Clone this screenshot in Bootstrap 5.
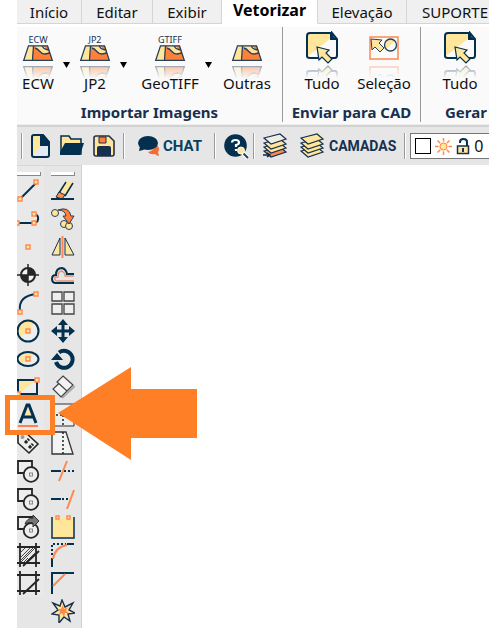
<!DOCTYPE html>
<html lang="pt">
<head>
<meta charset="utf-8">
<meta name="viewport" content="width=device-width, initial-scale=1">
<title>Vetorizar</title>
<link href="https://cdn.jsdelivr.net/npm/bootstrap@5.3.0/dist/css/bootstrap.min.css" rel="stylesheet">
<style>
:root{--navy:#03304f;--cream:#ffe69b;--orange:#ff8850;--panel:#e6e6e6}
body{font-family:"Noto Sans","Open Sans",sans-serif;font-size:16px;line-height:20px;color:#000;background:#fff}
svg{display:block;flex:none}
.app{padding-left:17px;min-height:100vh;overflow:hidden}
.tabs{height:27px}
.tabs .nav-link{padding:0;height:24px;color:#111;background:#f0f0f0;border:solid #d5d5d5;border-width:0 1px 1px 0;border-radius:0;font-size:15px;line-height:24px;flex:none}
.tabs .nav-link.active{background:#fff;border-bottom-color:#fff;color:#000;font-size:16px;font-weight:700;line-height:20px}
.t64{width:65px}.t71{width:71px}.t69{width:69px}.t96{width:96px}.t89{width:89px}.t97{width:97px}
.ribbon{background:#fafafa;height:98px;border-bottom:1px solid #eee}
.grp{height:95px;border-right:1px solid #999;flex:none}
.g1{width:266px}.g2{width:138px}.g3{width:160px}
.tool{background:none;border:0;padding:0;display:flex;flex-direction:column;align-items:center;line-height:18px;font-size:15px;flex:none;color:#111}
.tool svg{height:47px;margin-bottom:-4px}
.w42{width:42px}.w62{width:62px}
.caret{background:none;border:0;padding:31px 0 0;width:15px;display:flex;justify-content:center;flex:none}
.cap{font-weight:700;color:#17304f;font-size:15px;line-height:20px;padding-top:10px}
.bar{background:var(--panel);height:40px;border-top:2px solid #d2d2d2}
.bar button,.rail button{background:none;border:0;padding:0;flex:none}
.word{font:700 15px/20px Roboto,sans-serif;color:#06415a}
.word.dark{font-size:14px;color:#17304f}
.rule{width:2px;height:26px;border-left:1px solid #999;background:#fff;flex:none}
.layer{background:#fff;border:1px solid #777;height:26px;width:150px;flex:none}
.layer select{appearance:none;border:0;background:#fff;padding:0;font-size:16px;line-height:20px;color:#111;width:50px}
.swatch{width:16px;height:16px;border:1px solid #000;flex:none}
.work{min-height:calc(100vh - 165px)}
.dock{background:var(--panel);width:65px;border-right:1px solid #d0d0d0;border-top:1px solid #d8d8d8;flex:none}
.rail{display:flex;flex-direction:column;align-items:flex-start;flex:none;padding-top:6px}
.railA{width:27px;background:#e9e9e9;align-self:flex-start}
.railB{width:31px;margin-left:7px}
.rail button{height:28px;width:24px;display:flex;align-items:center}
.grip{width:24px;height:4px;background:#fff;border:solid #888;border-width:0 1px 1px 0;margin-bottom:1px}
.mark-box{position:absolute;left:5px;top:395px;width:50px;height:40px;border:5px solid #ff7f27}
.mark-arrow{position:absolute;left:57px;top:366px}
.i{fill:none;stroke:var(--navy);stroke-width:2}
.thin{stroke-width:1.5}.thick{stroke-width:3}.fat{stroke-width:4}
.p{fill:var(--cream);stroke:var(--orange);stroke-width:1.4}
.c{fill:var(--cream)}.o{fill:var(--orange)}.n{fill:var(--navy)}
.k{fill:none;stroke:#252525;stroke-width:1.8}
.tiny{font:9px "Noto Sans",sans-serif;fill:#17304f;text-anchor:middle}
</style>
<script src="https://cdn.jsdelivr.net/npm/bootstrap@5.3.0/dist/js/bootstrap.bundle.min.js"></script>
</head>
<body>
<svg width="0" height="0" class="position-absolute" aria-hidden="true">
<defs>
<linearGradient id="fade" x1="0" y1="0" x2="0" y2="1"><stop offset="0" stop-color="#fafafa" stop-opacity=".55"/><stop offset=".8" stop-color="#fafafa"/></linearGradient>
<g id="map"><path d="M5.500 .8H24.500L29.300 15.300H.7Z" fill="#ff8038"/><path d="M5.500 .8H10.500L9 15.300H.7ZM12 1H24C27 5 26 9 22 9C16 9 17 4 12 3Z" fill="#ffe69b"/><path d="M20 1H25L27 6C23 6 23 2 20 1Z" fill="#ff8038"/><path d="M5.500 .8H24.500L29.300 15.300H.7ZM10.500 1L9.500 15M12 3C17 4 16 9 22 9L27 8M19 1C21 5 23 4 26 5" fill="none" stroke="#27405c" stroke-width="1.300"/></g>
<g id="mapset"><use href="#map" x="1" y="13"/><use href="#map" transform="translate(1 50) scale(1 -1)"/><path d="M0 34H32V50H0Z" fill="url(#fade)"/></g>
<g id="send"><path d="M4 1H26L31 6V24Q31 27 28 27H4Q1 27 1 24V4Q1 1 4 1Z" fill="#fafafa"/><path d="M2 2H25V6L2 24Z" class="c"/><path d="M24 1L31 8H24Z" class="n"/><path d="M26 1H4Q1 1 1 4V24Q1 26 4 26H13M24 26H29Q31 26 31 23V7L26 1V7H31" fill="none" stroke="#03304f" stroke-width="2"/><path d="M11 15L23 18L20 21L26 27L22 31L16 25L13 28Z" fill="#ffe69b" stroke="#03304f" stroke-width="1.200"/></g>
<g id="sheet"><path d="M1 5L17 1L23 6L8 11Z"/></g>
<g id="trim"><path d="M1 2H15V14H1Z" fill="#eee" stroke="#252525" stroke-width="1.800"/><circle cx="14" cy="15.500" r="7.300" fill="#eee" stroke="#252525" stroke-width="1.800"/><rect x="12.500" y="14" width="3" height="3" fill="none" stroke="#888"/></g>
</defs>
</svg>
<div class="app position-relative">
<nav class="tabs nav flex-nowrap text-center" aria-label="Menu">
<a class="nav-link t64" href="#">Início</a><a class="nav-link t71" href="#">Editar</a><a class="nav-link t69" href="#">Exibir</a><a class="nav-link active t96" href="#" aria-current="page">Vetorizar</a><a class="nav-link t89" href="#">Elevação</a><a class="nav-link t97" href="#">SUPORTE</a>
</nav>
<section class="ribbon d-flex">
<div class="grp g1"><div class="d-flex pt-1">
<button class="tool w42"><svg width="32" height="47" viewBox="0 0 32 47"><text x="16" y="12" class="tiny">ECW</text><use href="#mapset" y="1"/></svg>ECW</button>
<button class="caret" aria-label="Opções ECW"><svg width="7" height="6"><path d="M0 0H7L3.500 6Z"/></svg></button>
<button class="tool w42"><svg width="32" height="47" viewBox="0 0 32 47"><text x="16" y="12" class="tiny">JP2</text><use href="#mapset" y="1"/></svg>JP2</button>
<button class="caret" aria-label="Opções JP2"><svg width="7" height="6"><path d="M0 0H7L3.500 6Z"/></svg></button>
<button class="tool w62 ms-2"><svg width="32" height="47" viewBox="0 0 32 47"><text x="16" y="12" class="tiny">GTIFF</text><use href="#mapset" y="1"/></svg>GeoTIFF</button>
<button class="caret" aria-label="Opções GeoTIFF"><svg width="7" height="6"><path d="M0 0H7L3.500 6Z"/></svg></button>
<button class="tool w62"><svg width="32" height="47" viewBox="0 0 32 47"><use href="#mapset" y="1"/></svg>Outras</button>
</div><div class="cap text-center">Importar Imagens</div></div>
<div class="grp g2"><div class="d-flex pt-1 ps-2">
<button class="tool w62"><svg width="32" height="47" viewBox="0 0 32 47"><use href="#send" y="1"/><use href="#send" transform="translate(0 66) scale(1 -1)"/><path d="M0 34H32V50H0Z" fill="url(#fade)"/></svg>Tudo</button>
<button class="tool w62"><svg width="32" height="47" viewBox="0 0 32 47"><g id="sel"><rect x="2" y="6" width="28" height="22" fill="#fafafa" stroke="#ff8850" stroke-width="1.500"/><path d="M3 8L14 9L11 12L16 17L12 21L7 16L4 19Z" fill="#ffe69b" stroke="#27405c"/><circle cx="22.500" cy="14" r="6" fill="#fafafa"/><path d="M18 18A6 6 0 0 1 27 10Z" class="c"/><circle cx="22.500" cy="14" r="6" fill="none" stroke="#27405c" stroke-width="1.300"/></g><use href="#sel" transform="translate(0 64) scale(1 -1)"/><path d="M0 34H32V50H0Z" fill="url(#fade)"/></svg>Seleção</button>
</div><div class="cap text-center">Enviar para CAD</div></div>
<div class="grp g3"><div class="d-flex pt-1 ps-2">
<button class="tool w62"><svg width="32" height="47" viewBox="0 0 32 47"><use href="#send" y="1"/><use href="#send" transform="translate(0 66) scale(1 -1)"/><path d="M0 34H32V50H0Z" fill="url(#fade)"/></svg>Tudo</button>
</div><div class="cap ps-4">Gerar</div></div>
</section>
<section class="bar d-flex align-items-center">
<i class="rule ms-1"></i>
<button class="ms-2" aria-label="Novo"><svg width="20" height="26" viewBox="0 0 20 26"><path d="M3 2H12L18 9V22Q18 24 16 24H3Q1 24 1 22V4Q1 2 3 2Z" fill="#e2eaf4"/><path d="M2 3H10V12L2 23Z" class="c"/><path d="M9 2H13L19 9V13H9Z" class="n"/><path d="M3 2H12L18 9V22Q18 24 16 24H3Q1 24 1 22V4Q1 2 3 2Z" class="i"/></svg></button>
<button class="ms-2" aria-label="Abrir"><svg width="26" height="24" viewBox="0 0 26 24"><path d="M2 2H10L12 5H22V20H2Z" fill="#ffe69b" stroke="#03304f" stroke-width="1.500"/><path d="M6 9H25L21 21H1V18Z" class="n"/></svg></button>
<button class="ms-2" aria-label="Salvar"><svg width="22" height="24" viewBox="0 0 22 24"><path d="M3 2H16L21 7V20Q21 22 19 22H3Q1 22 1 20V4Q1 2 3 2Z" fill="#ffe69b" stroke="#27304a" stroke-width="1.600"/><path d="M6 3H13V9H6Z" fill="#ff8038" stroke="#27304a"/><path d="M4 22V14Q4 12 6 12H16Q18 12 18 14V22Z" fill="#17304f"/></svg></button>
<i class="rule ms-2"></i>
<button class="d-flex align-items-center ms-2 me-1"><svg class="ms-1" width="26" height="24" viewBox="0 0 26 24"><path d="M18 9Q24 14 21 18L22 22Q20 22 18 20Q13 21 11 18Q18 17 18 9Z" fill="#f36c32"/><ellipse cx="11" cy="9" rx="10" ry="7" class="n"/><path d="M3 12L2 17Q6 17 9 14Z" class="n"/></svg><span class="word">CHAT</span></button>
<i class="rule ms-2"></i>
<button class="ms-2" aria-label="Ajuda"><svg width="25" height="26" viewBox="0 0 25 26"><circle cx="11.500" cy="12.500" r="11.300" class="n"/><path d="M8 9.500Q8 7 11.500 7Q15 7 15 9.500Q15 11.500 12 12V14M12 16V18" fill="none" stroke="#fff" stroke-width="2.200"/><path d="M18 19L24 25" stroke="#fff" stroke-width="4"/><path d="M19 20L24 25" stroke="#27405c" stroke-width="2"/><circle cx="17" cy="17.500" r="3.500" fill="#ffe69b" stroke="#fff"/></svg></button>
<i class="rule ms-1"></i>
<button class="ms-2" aria-label="Camada atual"><svg width="25" height="26" viewBox="0 0 25 26"><g stroke="#17304f" stroke-width="1.200"><use href="#sheet" y="13" fill="#ff8850"/><use href="#sheet" y="9" fill="#ffe69b"/><use href="#sheet" y="5" fill="#ffe69b"/><use href="#sheet" fill="#f1eee5"/></g><path d="M0 22H6M4 20L7 22L4 24" fill="none" stroke="#03304f" stroke-width="1.500"/></svg></button>
<button class="ms-2 d-flex align-items-center"><svg class="ms-1 me-1" width="25" height="26" viewBox="0 0 25 26"><g stroke="#17304f" stroke-width="1.200"><use href="#sheet" y="13" fill="#ffe69b"/><use href="#sheet" y="9" fill="#ffe69b"/><use href="#sheet" y="5" fill="#ffe69b"/><use href="#sheet" fill="#ffe69b"/></g></svg><span class="word dark">CAMADAS</span></button>
<i class="rule ms-2"></i>
<div class="layer d-flex align-items-center gap-1 ms-1 ps-1"><span class="swatch"></span>
<svg width="17" height="17" viewBox="0 0 17 17"><path d="M8.500 0V17M0 8.500H17M2.500 2.500L14.500 14.500M14.500 2.500L2.500 14.500" stroke="#ff8850" stroke-width="1.500"/><circle cx="8.500" cy="8.500" r="4.500" fill="#ffe69b" stroke="#fff"/><circle cx="8.500" cy="8.500" r="3.500" fill="#ffe69b" stroke="#ff8850"/></svg>
<svg width="14" height="17" viewBox="0 0 14 17"><path d="M4 5V4Q4 1 7.500 1Q11 1 11 4V8" class="i"/><rect x="1.500" y="8" width="11" height="7.500" fill="#ffe69b" stroke="#17304f" stroke-width="1.500"/><path d="M7 10V14" stroke="#17304f" stroke-width="2"/></svg>
<select aria-label="Camada"><option>0</option></select></div>
</section>
<main class="work d-flex">
<div class="dock d-flex">
<div class="rail railA"><div class="grip"></div>
<button aria-label="Linha"><svg width="24" height="24"><path d="M3 20L19 4" class="i"/><path d="M1 18h4v4h-4zM17 1h4v4h-4z" class="p"/></svg></button>
<button aria-label="Polilinha"><svg width="24" height="24"><path d="M1 16H17Q22 15 21 10Q20 7 16 7" class="i"/><path d="M-2 14h4v4h-4zM15 14h4v4h-4zM15 5h4v4h-4z" class="p"/></svg></button>
<button aria-label="Ponto"><svg width="24" height="24"><path d="M9 10h4v4h-4z" class="p"/></svg></button>
<button aria-label="Centro"><svg width="24" height="24"><circle cx="11" cy="12" r="7" fill="#f3f3f3" stroke="#252525" stroke-width="2"/><path d="M11 5A7 7 0 0 1 18 12H11V19A7 7 0 0 1 4 12H11Z" fill="#252525"/><path d="M11 1V23M0 12H22" stroke="#252525" stroke-width="1.500"/></svg></button>
<button aria-label="Arco"><svg width="24" height="24"><path d="M3 20Q1 5 19 3" class="i"/><path d="M1 19h4v4h-4zM17 1h4v4h-4z" class="p"/></svg></button>
<button aria-label="Círculo"><svg width="24" height="24"><circle cx="11" cy="12" r="10.500" fill="#eee"/><path d="M3 19A10.500 10.500 0 0 1 18 4Z" class="c"/><circle cx="11" cy="12" r="10.500" class="i"/><path d="M9 10h4v4h-4z" class="p"/></svg></button>
<button aria-label="Elipse"><svg width="24" height="24"><ellipse cx="11" cy="12" rx="10.500" ry="7" fill="#eee"/><path d="M4 17A10.500 7 0 0 1 18 7Z" class="c"/><ellipse cx="11" cy="12" rx="10.500" ry="7" class="i"/><path d="M9 10h4v4h-4z" class="p"/></svg></button>
<button aria-label="Retângulo"><svg width="24" height="24"><path d="M1 5H20V19H1Z" fill="#eee"/><path d="M1 5H20L1 19Z" class="c"/><path d="M1 5H20V19H1Z" class="i"/><path d="M-1 17h4v4h-4zM18 3h4v4h-4z" class="p"/></svg></button>
<button aria-label="Texto"><svg width="24" height="24"><path d="M11 5L14 13H8Z" class="c"/><path d="M3 20L10 2H12L19 20M6 14H16" class="i thick"/><path d="M1 23H21" stroke="#ff7f50" stroke-width="2"/></svg></button>
<button aria-label="Etiqueta"><svg width="24" height="24"><path d="M1 2L8 1L21 13L12 22L1 12Z" fill="#eee" stroke="#252525" stroke-width="1.600"/><circle cx="5.500" cy="6" r="2" fill="#999"/><path d="M8 12L12 8M12 17L16 13" stroke="#252525" stroke-width="3" stroke-dasharray="3 1"/></svg></button>
<button aria-label="Recortar 1"><svg width="24" height="24"><use href="#trim"/></svg></button>
<button aria-label="Recortar 2"><svg width="24" height="24"><use href="#trim"/></svg></button>
<button aria-label="Recortar 3"><svg width="24" height="24"><use href="#trim"/><path d="M8 9Q10 3 16 3V0L22 6L16 12V8Q12 6 8 9Z" fill="#777" stroke="#333"/></svg></button>
<button aria-label="Hachura"><svg width="24" height="24"><path d="M4 9L9 4M4 14L14 4M4 19L18 5M8 20L18 10M4 17L17 4M5 21L11 15" stroke="#444" stroke-width="1"/><path d="M0 4H23M0 20H23M3 0V24M19 0V24M6 23L22 8" class="k"/></svg></button>
<button aria-label="Contorno"><svg width="24" height="24"><path d="M0 4H23M0 20H23M3 0V24M19 0V24M6 23L22 8" class="k"/></svg></button>
</div>
<div class="rail railB"><div class="grip"></div>
<button aria-label="Apagar"><svg width="24" height="24"><path d="M8 15L15 3H22L13 17Z" fill="#ffe69b"/><path d="M8 14L15 3M14 17L22 4" class="i thin"/><path d="M8 13L14 16L11 20L5 18Z" class="o" stroke="#03304f"/><path d="M0 20H23" class="i"/></svg></button>
<button aria-label="Copiar"><svg width="24" height="24"><g fill="#ffe69b" stroke="#27405c"><circle cx="4" cy="6" r="3.500"/><circle cx="13" cy="17" r="3.500"/><circle cx="18" cy="19" r="3.500"/></g><path d="M7 3Q18 -1 20 9H23L18 17L12 9H15Q14 3 7 3Z" fill="#ff8038" stroke="#27405c"/></svg></button>
<button aria-label="Espelhar"><svg width="24" height="24"><path d="M9 3V20H1ZM14 3V20H23Z" fill="#ffe69b" stroke="#17304f"/><path d="M11.500 1V23" stroke="#ff8850" stroke-width="2"/></svg></button>
<button aria-label="Deslocar"><svg width="24" height="24"><path d="M23 20H5Q1 20 1 16Q1 12 5 12Q5 5 11 5Q15 6 16 11H23" class="i"/><path d="M23 18H6Q3 17 4 14H7Q7 8 11 8Q14 10 14 13H23" fill="none" stroke="#e5906f" stroke-width="1.300"/></svg></button>
<button aria-label="Matriz"><svg width="24" height="24"><path d="M1 1H11V10H1ZM13 1H23V10H13ZM1 13H11V23H1ZM13 13H23V23H13Z" fill="#eee" stroke="#444" stroke-width="1.300"/></svg></button>
<button aria-label="Mover"><svg width="24" height="24"><path d="M12 3V21M3 12H21" stroke="#03304f" stroke-width="3"/><path d="M12 0L17 6H7ZM12 24L7 18H17ZM0 12L6 7V17ZM24 12L18 17V7Z" class="n"/></svg></button>
<button aria-label="Girar"><svg width="24" height="24"><path d="M8 5.500A8.500 8.500 0 1 1 5 15" class="i fat"/><path d="M0 13L6 6L12 13Z" class="n"/></svg></button>
<button aria-label="Escala"><svg width="24" height="24"><path d="M11 23L24 11" stroke="#aaa" stroke-width="2"/><path d="M12 1L22 10L16 16L6 7ZM8 8.500L2 14L10 22L16 16Z" fill="#f3f3f3" stroke="#444" stroke-width="1.200"/></svg></button>
<button aria-label="Esticar"><svg width="24" height="24"><path d="M1 1H23V23H1Z" fill="#eee" stroke="#333"/><path d="M1 12H23M12 12V22" stroke="#222" stroke-width="1.500" stroke-dasharray="2 2"/></svg></button>
<button aria-label="Perspectiva"><svg width="24" height="24"><path d="M1 1H15L22 23H1Z" fill="#f3f3f3" stroke="#333" stroke-width="1.300"/><path d="M12 1V23" stroke="#222" stroke-width="1.500" stroke-dasharray="2 2"/></svg></button>
<button aria-label="Aparar"><svg width="24" height="24"><path d="M0 12H10" class="i"/><path d="M13 12H24" class="i" stroke-dasharray="2 2"/><path d="M8 22L16 2" stroke="#ff8850" stroke-width="2"/></svg></button>
<button aria-label="Estender"><svg width="24" height="24"><path d="M0 12H10" class="i"/><path d="M11 12H19" class="i" stroke-dasharray="2 2"/><path d="M16 22L23 3" stroke="#ff8850" stroke-width="2"/></svg></button>
<button aria-label="Quebrar"><svg width="24" height="24"><path d="M1 3H23V23H1Z" class="c"/><path d="M1 2V23H23V2" class="i thin"/><path d="M5 1h3v3h-3zM16 1h3v3h-3z" class="p"/></svg></button>
<button aria-label="Arredondar"><svg width="24" height="24"><path d="M1 15V24M16 1H23" class="i"/><path d="M1 12V1H15" class="i" stroke-dasharray="2 2"/><path d="M2 16Q4 4 16 2" fill="none" stroke="#ff8850" stroke-width="2"/></svg></button>
<button aria-label="Chanfrar"><svg width="24" height="24"><path d="M1 23V2H23" class="i"/><path d="M2 15L14 3" stroke="#ff8850" stroke-width="2"/></svg></button>
<button aria-label="Explodir"><svg width="24" height="24"><path d="M11 1L14 8L22 4L18 11L24 14L17 15L19 22L13 18L8 24L8 16L1 15L7 11L2 4L9 7Z" fill="#ffe69b" stroke="#17304f" stroke-width="1.400"/><path d="M12 6L13 10L17 8L15 12L18 14L14 14L13 18L11 14L8 16L9 12L6 10L10 10Z" class="o"/></svg></button>
</div>
</div>
<div class="flex-grow-1 bg-white"></div>
</main>
<div class="mark-box" aria-hidden="true"></div>
<svg class="mark-arrow" width="141" height="95" aria-hidden="true"><path d="M1 47L74 1V23H140V72H74V94Z" fill="#ff7f27"/></svg>
</div>
</body>
</html>
